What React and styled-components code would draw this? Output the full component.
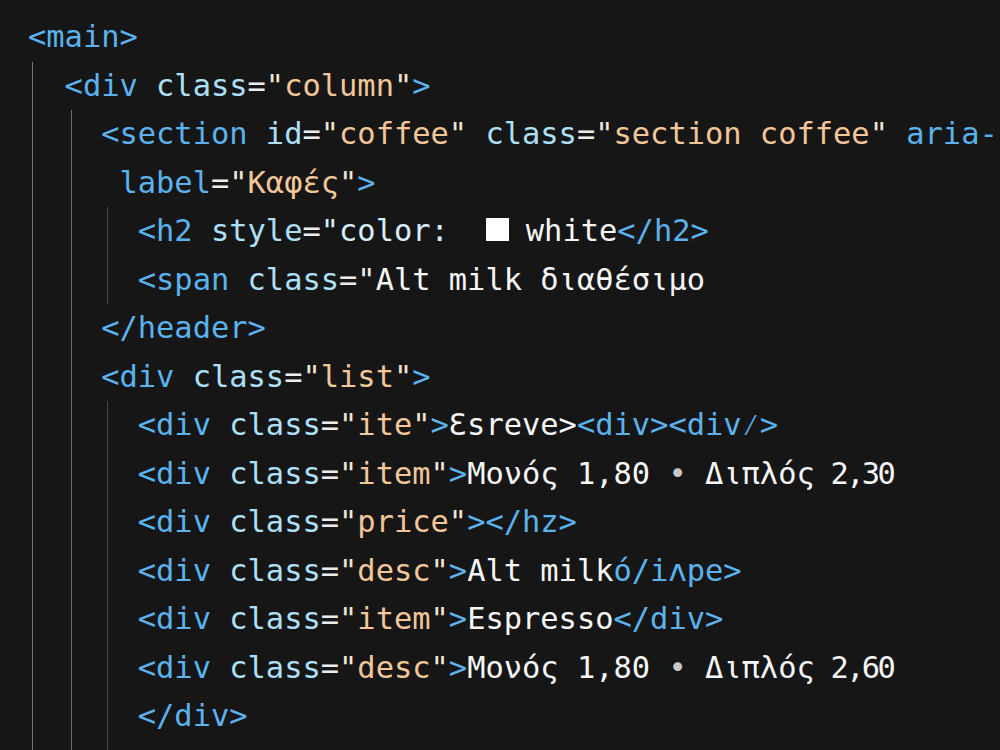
import React from "react";
import styled, { createGlobalStyle } from "styled-components";

const GlobalStyle = createGlobalStyle`
  html, body {
    margin: 0;
    padding: 0;
    background: #161616;
  }
`;

const Editor = styled.div`
  width: 1000px;
  height: 750px;
  overflow: hidden;
  background: #161616;
  padding-top: 13px;
  box-sizing: border-box;
  font-family: "DejaVu Sans Mono", "Liberation Mono", monospace;
  font-size: 30.4px;
`;

// indent guides are painted as thin stripes in the line background
const guideBackground = guides =>
  guides.length
    ? guides
        .map(
          ([x, color]) =>
            `linear-gradient(to right, transparent ${x}px, ${color} ${x}px, ${color} ${x + 1}px, transparent ${x + 1}px)`
        )
        .join(", ")
    : "none";

const Line = styled.div`
  height: 48.5px;
  line-height: 48.5px;
  padding-left: 28px;
  white-space: pre;
  background: ${props => guideBackground(props.$guides)};
`;

const colors = {
  tag: "#5bb3ee",
  attr: "#ade0f8",
  punct: "#ececec",
  quote: "#f2e4d3",
  str: "#f2c699",
  text: "#f6f6f6",
  narrow: "#f6f6f6",
  css: "#d6effa",
  dim: "#c8c8c8",
};

const Token = styled.span`
  color: ${props => colors[props.$kind] || colors.text};
  letter-spacing: ${props => (props.$kind === "narrow" ? "-2.6px" : "normal")};
`;

const Swatch = styled.span`
  display: inline-block;
  width: 23px;
  height: 23px;
  background: #ffffff;
  margin-left: 37px;
  margin-right: 17px;
  vertical-align: baseline;
`;

const G1 = [32, "#747474"];
const G2 = [71, "#6a6a6a"];
const G3 = [107, "#474747"];

const attr = (name, value) => [
  ["text", " "],
  ["attr", name],
  ["punct", "="],
  ["quote", '"'],
  ["str", value],
  ["quote", '"'],
];

const lines = [
  { g: [], t: [["tag", "<main>"]] },
  {
    g: [G1],
    t: [["text", "  "], ["tag", "<div"], ...attr("class", "column"), ["tag", ">"]],
  },
  {
    g: [G1, G2],
    t: [
      ["text", "    "],
      ["tag", "<section"],
      ...attr("id", "coffee"),
      ...attr("class", "section coffee"),
      ["text", " "],
      ["tag", "aria-"],
    ],
  },
  {
    g: [G1, G2],
    t: [
      ["text", "     "],
      ["tag", "label"],
      ["punct", "="],
      ["quote", '"'],
      ["str", "Καφές"],
      ["quote", '"'],
      ["tag", ">"],
    ],
  },
  {
    g: [G1, G2, G3],
    t: [
      ["text", "      "],
      ["tag", "<h2"],
      ["text", " "],
      ["attr", "style"],
      ["punct", "="],
      ["css", '"color:'],
      ["swatch", ""],
      ["text", "white"],
      ["tag", "</h2>"],
    ],
  },
  {
    g: [G1, G2, G3],
    t: [
      ["text", "      "],
      ["tag", "<span"],
      ["text", " "],
      ["attr", "class"],
      ["punct", '="'],
      ["text", "Alt milk διαθέσιμο"],
    ],
  },
  { g: [G1, G2], t: [["text", "    "], ["tag", "</header>"]] },
  {
    g: [G1, G2],
    t: [["text", "    "], ["tag", "<div"], ...attr("class", "list"), ["tag", ">"]],
  },
  {
    g: [G1, G2, G3],
    t: [
      ["text", "      "],
      ["tag", "<div"],
      ...attr("class", "ite"),
      ["tag", ">"],
      ["text", "Ɛsreve>"],
      ["tag", "<div><div"],
      ["tag", "⁄"],
      ["tag", ">"],
    ],
  },
  {
    g: [G1, G2, G3],
    t: [
      ["text", "      "],
      ["tag", "<div"],
      ...attr("class", "item"),
      ["tag", ">"],
      ["text", "Μονός 1,80 "],
      ["dim", "•"],
      ["text", " Διπλός"],
      ["narrow", " 2,30"],
    ],
  },
  {
    g: [G1, G2, G3],
    t: [
      ["text", "      "],
      ["tag", "<div"],
      ...attr("class", "price"),
      ["tag", "></hz>"],
    ],
  },
  {
    g: [G1, G2, G3],
    t: [
      ["text", "      "],
      ["tag", "<div"],
      ...attr("class", "desc"),
      ["tag", ">"],
      ["text", "Alt milk"],
      ["tag", "ó/iʌpe>"],
    ],
  },
  {
    g: [G1, G2, G3],
    t: [
      ["text", "      "],
      ["tag", "<div"],
      ...attr("class", "item"),
      ["tag", ">"],
      ["text", "Espresso"],
      ["tag", "</div>"],
    ],
  },
  {
    g: [G1, G2, G3],
    t: [
      ["text", "      "],
      ["tag", "<div"],
      ...attr("class", "desc"),
      ["tag", ">"],
      ["text", "Μονός 1,80 "],
      ["dim", "•"],
      ["text", " Διπλός"],
      ["narrow", " 2,60"],
    ],
  },
  { g: [G1, G2, G3], t: [["text", "      "], ["tag", "</div>"]] },
  {
    g: [G1, G2, G3],
    t: [
      ["text", "      "],
      ["tag", "<div"],
      ...attr("class", "item"),
      ["tag", ">"],
      ["text", "Cappuccino"],
      ["tag", "</div>"],
    ],
  },
];

export default function App() {
  return (
    <>
      <GlobalStyle />
      <Editor>
        {lines.map((line, i) => (
          <Line key={i} $guides={line.g}>
            {line.t.map(([kind, text], j) =>
              kind === "swatch" ? (
                <Swatch key={j} />
              ) : (
                <Token key={j} $kind={kind}>
                  {text}
                </Token>
              )
            )}
          </Line>
        ))}
      </Editor>
    </>
  );
}
